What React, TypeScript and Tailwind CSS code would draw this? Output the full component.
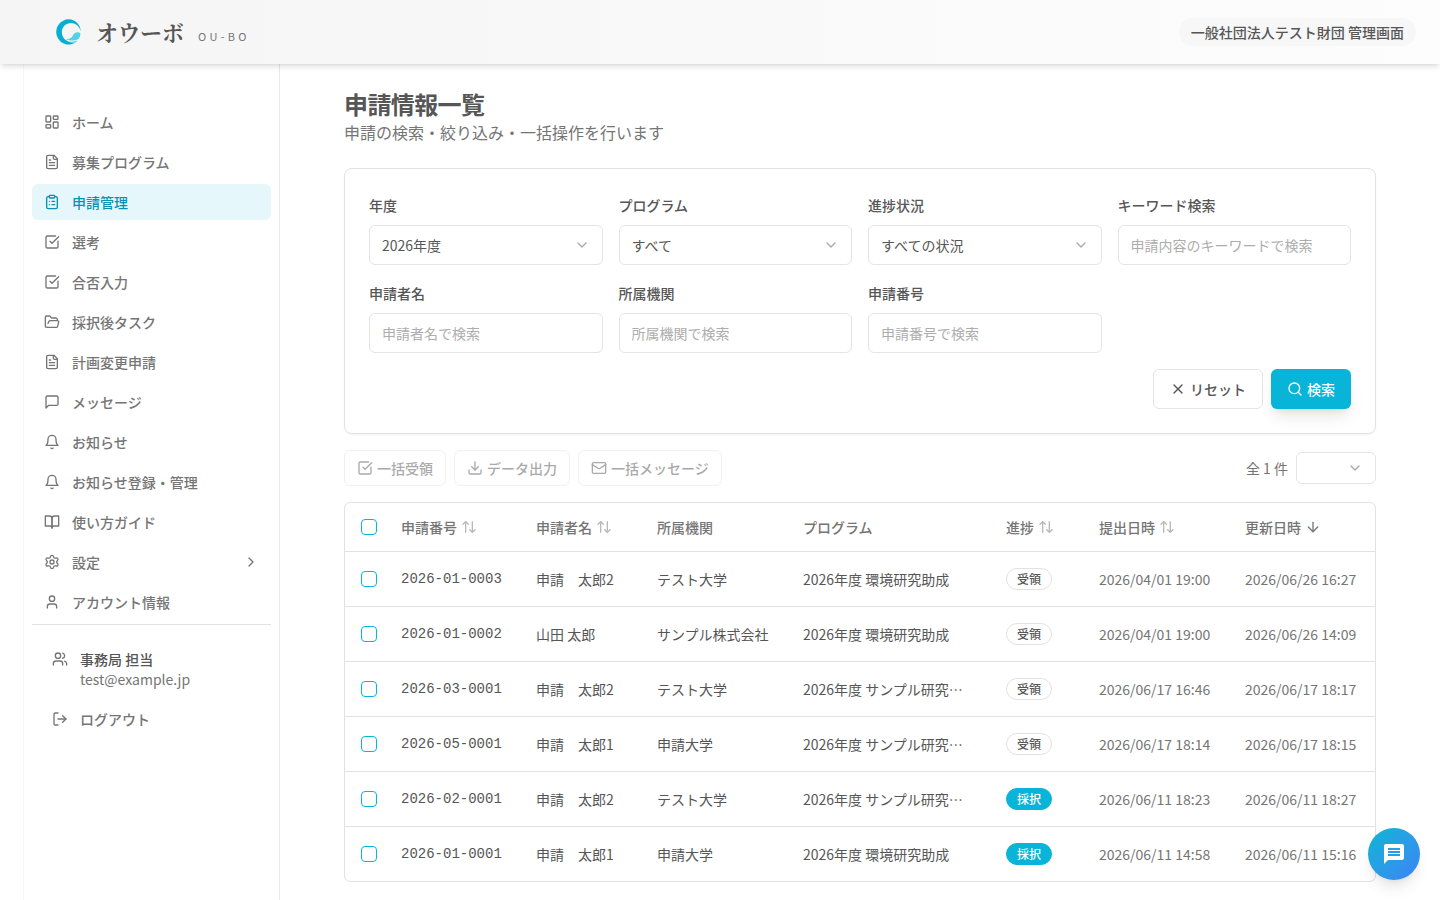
import type { ComponentType, ReactNode } from "react";
import {
  ArrowDown,
  ArrowUpDown,
  ChevronDown,
  ChevronRight,
  ClipboardList,
  Download,
  FolderOpen,
  LayoutDashboard,
  LogOut,
  Mail,
  Search,
  Settings,
  SquareCheckBig,
  User,
  Users,
  X,
} from "lucide-react";
import { MdMessage } from "react-icons/md";

type IconProps = { className?: string };
type Icon = ComponentType<IconProps>;

function Stroke({ className, children }: IconProps & { children: ReactNode }) {
  return (
    <svg
      viewBox="0 0 24 24"
      fill="none"
      stroke="currentColor"
      strokeWidth="2"
      strokeLinecap="round"
      strokeLinejoin="round"
      className={className}
      aria-hidden="true"
    >
      {children}
    </svg>
  );
}

const FileText: Icon = ({ className }) => (
  <Stroke className={className}>
    <path d="M15 2H6a2 2 0 0 0-2 2v16a2 2 0 0 0 2 2h12a2 2 0 0 0 2-2V7Z" />
    <path d="M14 2v4a2 2 0 0 0 2 2h4M10 9H8M16 13H8M16 17H8" />
  </Stroke>
);

const Message: Icon = ({ className }) => (
  <Stroke className={className}>
    <path d="M21 15a2 2 0 0 1-2 2H7l-4 4V5a2 2 0 0 1 2-2h14a2 2 0 0 1 2 2z" />
  </Stroke>
);

const Bell: Icon = ({ className }) => (
  <Stroke className={className}>
    <path d="M6 8a6 6 0 0 1 12 0c0 7 3 9 3 9H3s3-2 3-9" />
    <path d="M10.3 21a1.94 1.94 0 0 0 3.4 0" />
  </Stroke>
);

const Book: Icon = ({ className }) => (
  <Stroke className={className}>
    <path d="M2 3h6a4 4 0 0 1 4 4v14a3 3 0 0 0-3-3H2z" />
    <path d="M22 3h-6a4 4 0 0 0-4 4v14a3 3 0 0 1 3-3h7z" />
  </Stroke>
);

function Logo() {
  return (
    <svg viewBox="0 0 26 26" className="size-[26px]" aria-hidden="true">
      <path
        d="M24.800 12.500C24.500 5.500 19 0.300 12.800 0.300A12.600 12.600 0 1 0 19.500 23.600C16 24 12.500 23.200 10.500 21.600C7.500 19.800 5.800 16.800 5.800 13.200C5.800 7.800 10 3.900 15 3.900C20 3.900 23.800 7.500 24.800 12.500Z"
        fill="#06aed3"
      />
      <path
        d="M10 20C14 20.300 15.800 18.500 17 16.200C18.200 13.600 21.500 12.600 24.300 13.900C24.600 17 23.500 19.300 21.500 20.600C18 22 13 21.700 10 20Z"
        fill="#55d0e7"
      />
      <path d="M12 22.200C15 23 18.500 22.700 21.500 21.600C20.500 22.800 19.500 23.500 18.500 23.800C16 24 13.500 23.400 12 22.200Z" fill="#55d0e7" />
    </svg>
  );
}

const navItems: { label: string; icon: Icon; active?: boolean; expandable?: boolean }[] = [
  { label: "ホーム", icon: LayoutDashboard },
  { label: "募集プログラム", icon: FileText },
  { label: "申請管理", icon: ClipboardList, active: true },
  { label: "選考", icon: SquareCheckBig },
  { label: "合否入力", icon: SquareCheckBig },
  { label: "採択後タスク", icon: FolderOpen },
  { label: "計画変更申請", icon: FileText },
  { label: "メッセージ", icon: Message },
  { label: "お知らせ", icon: Bell },
  { label: "お知らせ登録・管理", icon: Bell },
  { label: "使い方ガイド", icon: Book },
  { label: "設定", icon: Settings, expandable: true },
  { label: "アカウント情報", icon: User },
];

const rows = [
  { id: "2026-01-0003", name: "申請　太郎2", org: "テスト大学", program: "2026年度 環境研究助成", status: "受領", submitted: "2026/04/01 19:00", updated: "2026/06/26 16:27" },
  { id: "2026-01-0002", name: "山田 太郎", org: "サンプル株式会社", program: "2026年度 環境研究助成", status: "受領", submitted: "2026/04/01 19:00", updated: "2026/06/26 14:09" },
  { id: "2026-03-0001", name: "申請　太郎2", org: "テスト大学", program: "2026年度 サンプル研究…", status: "受領", submitted: "2026/06/17 16:46", updated: "2026/06/17 18:17" },
  { id: "2026-05-0001", name: "申請　太郎1", org: "申請大学", program: "2026年度 サンプル研究…", status: "受領", submitted: "2026/06/17 18:14", updated: "2026/06/17 18:15" },
  { id: "2026-02-0001", name: "申請　太郎2", org: "テスト大学", program: "2026年度 サンプル研究…", status: "採択", submitted: "2026/06/11 18:23", updated: "2026/06/11 18:27" },
  { id: "2026-01-0001", name: "申請　太郎1", org: "申請大学", program: "2026年度 環境研究助成", status: "採択", submitted: "2026/06/11 14:58", updated: "2026/06/11 15:16" },
];

const columns: { label: string; width: string; sort?: "both" | "desc" }[] = [
  { label: "申請番号", width: "w-[135px]", sort: "both" },
  { label: "申請者名", width: "w-[121px]", sort: "both" },
  { label: "所属機関", width: "w-[146px]" },
  { label: "プログラム", width: "" },
  { label: "進捗", width: "w-[93px]", sort: "both" },
  { label: "提出日時", width: "w-[146px]", sort: "both" },
  { label: "更新日時", width: "w-[146px]", sort: "desc" },
];

function Header() {
  return (
    <header className="relative z-10 flex h-16 items-center justify-between bg-linear-to-r from-[#f5f5f5] to-[#fdfdfd] pr-6 pl-14 shadow-md">
      <a href="#" className="flex items-center">
        <Logo />
        <span className="ml-[14px] font-['Noto_Serif_CJK_JP','Noto_Serif_JP','Noto_Sans_CJK_JP',serif] text-[22px] leading-8 font-bold">
          オウーボ
        </span>
        <span className="mt-2 ml-[14px] text-[11px] leading-4 tracking-[0.3em] text-[#757575]">OU-BO</span>
      </a>
      <p className="rounded-full bg-[#f7f7f7] px-3 py-1 text-sm font-medium">
        一般社団法人テスト財団 管理画面
      </p>
    </header>
  );
}

function Sidebar() {
  return (
    <aside className="ml-[23px] w-[257px] shrink-0 border-x border-[#e8e8e8] border-l-[#f7f7f7] px-2 pt-10 text-sm font-medium text-[#757575]">
      <nav className="flex flex-col gap-1 border-b border-[#e2e2e2] pb-1">
        {navItems.map(({ label, icon: ItemIcon, active, expandable }) => (
          <a
            key={label}
            href="#"
            aria-current={active ? "page" : undefined}
            className={
              active
                ? "flex h-9 items-center gap-3 rounded-md bg-[#e6f7fb] px-3 text-[#0891b2]"
                : "flex h-9 items-center gap-3 rounded-md px-3"
            }
          >
            <ItemIcon className="size-4" />
            <span className="flex-1">{label}</span>
            {expandable && <ChevronRight className="size-4" />}
          </a>
        ))}
      </nav>
      <div className="flex gap-3 px-5 pt-6">
        <Users className="mt-0.5 size-4" />
        <div>
          <p className="text-[#565656]">事務局 担当</p>
          <p className="font-normal">test@example.jp</p>
        </div>
      </div>
      <button type="button" className="mt-3 flex h-9 w-full items-center gap-3 px-5">
        <LogOut className="size-4" />
        ログアウト
      </button>
    </aside>
  );
}

function SelectField({ id, label, value }: { id: string; label: string; value: string }) {
  return (
    <div className="flex flex-col gap-2">
      <label htmlFor={id} className="text-sm leading-6 font-medium">
        {label}
      </label>
      <div className="relative">
        <select id={id} className="block h-10 w-full appearance-none rounded-md border border-[#e4e4e4] bg-white px-3 text-sm">
          <option>{value}</option>
        </select>
        <ChevronDown className="pointer-events-none absolute top-3 right-[13px] size-4 opacity-50" />
      </div>
    </div>
  );
}

function TextField({ id, label, placeholder }: { id: string; label: string; placeholder: string }) {
  return (
    <div className="flex flex-col gap-2">
      <label htmlFor={id} className="text-sm leading-6 font-medium">
        {label}
      </label>
      <input
        id={id}
        type="text"
        placeholder={placeholder}
        className="h-10 w-full rounded-md border border-[#e4e4e4] bg-white px-3 text-sm placeholder:text-[#adadad]"
      />
    </div>
  );
}

function SearchCard() {
  return (
    <form className="mt-6 rounded-lg border border-[#e2e2e2] p-6 shadow-xs" onSubmit={(e) => e.preventDefault()}>
      <div className="grid grid-cols-4 gap-4">
        <SelectField id="year" label="年度" value="2026年度" />
        <SelectField id="program" label="プログラム" value="すべて" />
        <SelectField id="status" label="進捗状況" value="すべての状況" />
        <TextField id="keyword" label="キーワード検索" placeholder="申請内容のキーワードで検索" />
        <TextField id="applicant" label="申請者名" placeholder="申請者名で検索" />
        <TextField id="org" label="所属機関" placeholder="所属機関で検索" />
        <TextField id="number" label="申請番号" placeholder="申請番号で検索" />
      </div>
      <div className="mt-4 flex justify-end gap-2 text-sm font-medium">
        <button type="reset" className="flex h-10 items-center gap-1 rounded-md border border-[#e4e4e4] bg-white px-4">
          <X className="size-4" />
          リセット
        </button>
        <button type="submit" className="flex h-10 items-center gap-1 rounded-md bg-[#08b5d8] px-4 text-white shadow-lg">
          <Search className="size-4" />
          検索
        </button>
      </div>
    </form>
  );
}

function BulkButton({ icon: ButtonIcon, label }: { icon: Icon; label: string }) {
  return (
    <button
      type="button"
      disabled
      className="flex h-9 items-center gap-1 rounded-md border border-[#e2e2e2] bg-white px-3 text-sm font-medium opacity-50"
    >
      <ButtonIcon className="size-4" />
      {label}
    </button>
  );
}

function Toolbar() {
  return (
    <div className="mt-4 flex items-center justify-between">
      <div className="flex gap-2">
        <BulkButton icon={SquareCheckBig} label="一括受領" />
        <BulkButton icon={Download} label="データ出力" />
        <BulkButton icon={Mail} label="一括メッセージ" />
      </div>
      <div className="flex items-center gap-2">
        <span className="text-sm text-[#757575]">全 1 件</span>
        <div className="relative">
          <select aria-label="表示件数" className="block h-8 w-20 appearance-none rounded-md border border-[#e4e4e4] bg-white px-3 text-sm">
            <option></option>
          </select>
          <ChevronDown className="pointer-events-none absolute top-2 right-[13px] size-4 opacity-50" />
        </div>
      </div>
    </div>
  );
}

function Check({ label }: { label: string }) {
  return (
    <input
      type="checkbox"
      aria-label={label}
      className="block size-4 appearance-none rounded-sm border border-[#08b5d8] bg-white checked:bg-[#08b5d8]"
    />
  );
}

function ApplicationTable() {
  return (
    <div className="mt-4 rounded-md border border-[#e2e2e2]">
      <table className="w-full table-fixed text-left text-sm">
        <thead>
          <tr className="h-12 border-b border-[#e2e2e2] text-[#757575]">
            <th className="w-10 pl-4">
              <Check label="すべて選択" />
            </th>
            {columns.map(({ label, width, sort }) => (
              <th key={label} className={`${width} px-4 font-medium whitespace-nowrap`}>
                {sort ? (
                  <button type="button" className="flex items-center gap-1">
                    {label}
                    {sort === "both" ? <ArrowUpDown className="size-4 opacity-50" /> : <ArrowDown className="size-4" />}
                  </button>
                ) : (
                  label
                )}
              </th>
            ))}
          </tr>
        </thead>
        <tbody>
          {rows.map((row) => (
            <tr key={row.id} className="h-[55px] border-b border-[#e2e2e2] whitespace-nowrap last:border-b-0">
              <td className="pl-4">
                <Check label={`${row.id}を選択`} />
              </td>
              <td className="px-4 font-['Liberation_Mono',monospace]">{row.id}</td>
              <td className="px-4">{row.name}</td>
              <td className="px-4">{row.org}</td>
              <td className="px-4">{row.program}</td>
              <td className="px-4">
                <span
                  className={
                    row.status === "採択"
                      ? "block w-fit rounded-full border border-[#08b5d8] bg-[#08b5d8] px-2.5 py-0.5 text-xs font-medium text-white"
                      : "block w-fit rounded-full border border-[#e2e2e2] px-2.5 py-0.5 text-xs font-medium"
                  }
                >
                  {row.status}
                </span>
              </td>
              <td className="px-4 text-[#757575]">{row.submitted}</td>
              <td className="px-4 text-[#757575]">{row.updated}</td>
            </tr>
          ))}
        </tbody>
      </table>
    </div>
  );
}

export default function App() {
  return (
    <div className="flex min-h-screen flex-col bg-white font-['Noto_Sans_CJK_JP',sans-serif] text-[#565656]">
      <Header />
      <div className="flex flex-1">
        <Sidebar />
        <main className="min-w-0 flex-1 px-16 pt-6 pb-4">
          <h1 className="text-2xl font-bold tracking-tight">申請情報一覧</h1>
          <p className="text-base text-[#757575]">申請の検索・絞り込み・一括操作を行います</p>
          <SearchCard />
          <Toolbar />
          <ApplicationTable />
        </main>
      </div>
      <button
        type="button"
        aria-label="チャットを開く"
        className="fixed right-5 bottom-5 z-20 flex size-[52px] items-center justify-center rounded-full bg-linear-to-br from-[#06b6d4] to-[#3b82f6] text-white shadow-lg"
      >
        <MdMessage className="size-6" />
      </button>
    </div>
  );
}
